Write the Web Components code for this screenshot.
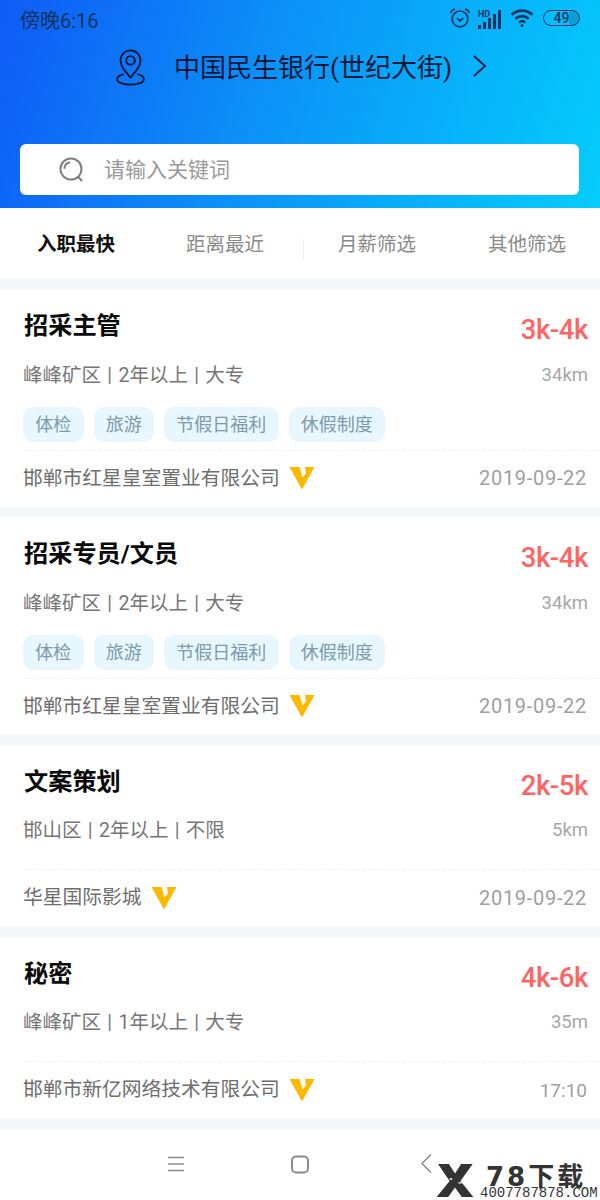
<!DOCTYPE html>
<html lang="zh"><head><meta charset="utf-8"><title>招聘</title>
<style>
html,body{margin:0;padding:0;background:#f2f7fa;}
body{width:600px;height:1200px;overflow:hidden;font-family:Roboto,"Noto Sans CJK SC",sans-serif;}
job-app{display:block;}
</style></head><body>
<template id="t-header"><style>
:host{display:block;height:208px;background:linear-gradient(108deg,#0f5bf6 0%,#0c8ff7 42%,#08b0fa 72%,#04cdfb 100%);position:relative;color:#0a1c3c;}
.status{display:flex;align-items:center;height:38px;padding:0 20px;font-size:20px;color:#12345e;}
.status .r{margin-left:auto;display:flex;align-items:center;gap:0;margin-top:-2px;}
.loc{display:flex;align-items:center;margin-top:5px;height:50px;padding-left:115px;font-size:26px;color:#071838;}
.loc .name{margin:-5px 0 0 28px;letter-spacing:0;white-space:nowrap;}
.loc .chev{margin:-4px 0 0 20px;}
.search{display:flex;align-items:center;margin:51px 21px 0 20px;height:51px;background:#fff;border-radius:6px;padding-left:38px;font-size:21px;color:#9a9a9a;}
.search span{margin:-4px 0 0 18px;}
svg{display:block;}
</style>
<div class="status"><slot name="time"></slot><div class="r">
<svg width="22" height="22" viewBox="0 0 24 24" fill="none" stroke="#12345e" stroke-width="1.800" style="margin-right:7px"><circle cx="12" cy="13" r="8.600"/><path d="M8.500 12.200l3.500 3 3.500-3M1.600 6.500C2.600 4 4.600 2.600 6.600 2.200M22.400 6.500c-1-2.500-3-3.900-5-4.300"/></svg>
<svg width="25" height="24" viewBox="0 0 25 24" style="margin-right:7px"><g fill="#12345e"><rect x="0" y="19" width="3" height="4"/><rect x="5" y="16" width="3" height="7"/><rect x="10" y="12" width="3" height="11"/><rect x="15" y="8" width="3" height="15"/><rect x="20" y="4" width="3" height="19"/></g><text x="0" y="10.500" font-size="9" font-weight="700" font-family="Roboto,sans-serif" fill="#12345e">HD</text></svg>
<svg width="24" height="20" viewBox="0 0 24 20" fill="none" stroke="#12345e" stroke-width="2.600" style="margin-right:9px"><path d="M1.500 6.800C7.500 1.200 16.500 1.200 22.500 6.800M5.300 10.800c4-3.600 9.400-3.600 13.400 0M8.900 14.400c1.900-1.500 4.300-1.500 6.200 0"/><circle cx="12" cy="17.600" r="1.500" fill="#12345e" stroke="none"/></svg>
<div style="width:35px;height:14px;border:1.600px solid #12345e;border-radius:8px;font-size:14px;line-height:14px;text-align:center;color:#12345e;font-weight:500;background:linear-gradient(90deg,transparent 70%,#0a9fd8 70%)">49</div>
</div></div>
<div class="loc">
<svg width="31" height="40" viewBox="0 0 32 42" fill="none" stroke="#071838" stroke-width="2"><path d="M16 31C10 24 5.500 19 5.500 13A10.500 10.500 0 0 1 26.500 13C26.500 19 22 24 16 31Z" stroke-linejoin="round"/><circle cx="16" cy="13" r="4.500"/><path d="M9 27.500C4.500 28.500 2 30.500 2 33c0 3 6 5.500 14 5.500s14-2.500 14-5.500c0-2.500-2.500-4.500-7-5.500"/></svg>
<span class="name"><slot name="place"></slot></span>
<svg class="chev" width="16" height="24" viewBox="0 0 16 24" fill="none" stroke="#071838" stroke-width="1.800"><path d="M2 2l11 10L2 22"/></svg>
</div>
<div class="search">
<svg width="28" height="28" viewBox="0 0 28 28" fill="none" stroke="#808080" stroke-width="2"><circle cx="13" cy="13" r="10.500"/><path d="M20.500 21l3 3.500M6.500 12c.3-3 2.500-5 5-5.500" stroke-linecap="round"/></svg>
<span><slot name="hint"></slot></span>
</div></template>

<template id="t-filter"><style>
:host{display:flex;align-items:center;height:71px;background:#fff;padding:0 0 2px 37px;font-size:19.500px;color:#8a8a8a;box-sizing:border-box;}
::slotted(*){display:block;width:78px;white-space:nowrap;}
</style><slot></slot></template>

<template id="t-job"><style>
:host{display:block;background:#fff;margin-top:10px;padding-left:24px;}
.top{box-sizing:border-box;padding:17px 12px 0 0;height:161px;}
:host([plain]) .top{height:124px;}
.row{display:flex;align-items:center;justify-content:space-between;}
.r1{height:40px;}
.title{font-size:24.200px;font-weight:700;color:#0a0a0a;margin-top:-6px;}
.sal{font-size:27.500px;color:#ff6464;font-weight:500;margin-top:6px;letter-spacing:-.4px;}
.r2{height:40px;margin-top:9px;font-size:19.500px;color:#767676;}
:host([plain]) .r2{margin-top:8px;}
.info{margin:-4px 0 0 -1px;word-spacing:1.500px;}
.km{font-size:18.500px;color:#a8a8a8;}
.tags{display:flex;gap:10px;margin:12px 0 0 -1px;}
.foot{display:flex;align-items:center;box-sizing:border-box;height:57px;border-top:1px dashed #eef0f2;padding-right:13px;font-size:19.750px;color:#6e6e6e;}
:host([plain]) .foot{height:58px;}
.co{margin:-6px 0 0 -1px;}
.foot svg{margin-left:9px;margin-top:-2px;}
.date{margin-left:auto;color:#a0a0a0;font-size:20px;margin-top:-2px;}
</style>
<div class="top"><div class="row r1"><div class="title"><slot name="title"></slot></div><div class="sal"><slot name="salary"></slot></div></div>
<div class="row r2"><div class="info"><slot name="meta"></slot></div><div class="km"><slot name="dist"></slot></div></div>
<div class="tags"><slot name="tag"></slot></div></div>
<div class="foot"><span class="co"><slot name="company"></slot></span>
<svg width="26" height="24" viewBox="0 0 26 24"><path d="M0.500 1H10.500L13.500 11.500 17 7.500 16 1H25.500L13 23.500Z" fill="#fdb900"/></svg>
<span class="date"><slot name="date"></slot></span></div></template>

<template id="t-tag"><style>
:host{display:block;height:35px;line-height:35px;padding:0 12.250px;background:#e8f6fd;border-radius:10px;color:#7c9bac;font-size:18px;white-space:nowrap;}
</style><slot></slot></template>

<template id="t-nav"><style>
:host{display:block;position:relative;margin-top:10px;background:#fff;padding-top:10px;height:71px;box-sizing:border-box;}
.btns{display:flex;align-items:center;height:50px;padding-left:167px;}
svg{display:block;}
.mark{position:absolute;left:436px;top:33px;width:164px;height:38px;color:#333;}
.logo{position:absolute;left:0;top:1px;}
.big{position:absolute;left:50px;top:6px;font-size:26px;font-weight:700;letter-spacing:3px;line-height:19px;white-space:nowrap;font-family:"DejaVu Sans","Noto Sans CJK SC",sans-serif;}
.small{position:absolute;left:44px;top:26px;font:14px/10px "Liberation Mono",monospace;white-space:nowrap;}
</style>
<div class="btns">
<svg width="18" height="16" viewBox="0 0 18 16" stroke="#8c8c8c" stroke-width="1.500"><path d="M1 1.500h16M1 8h16M1 14.500h16"/></svg>
<svg width="18" height="19" viewBox="0 0 18 19" fill="none" stroke="#8c8c8c" stroke-width="2" style="margin-left:106px"><rect x="1" y="1.500" width="16" height="16" rx="4"/></svg>
<svg width="14" height="22" viewBox="0 0 14 22" fill="none" stroke="#8c8c8c" stroke-width="1.500" style="margin-left:111px"><path d="M11 1.500L2 10.500l9 9"/></svg>
</div>
<div class="mark">
<svg class="logo" width="38" height="34" viewBox="0 0 56 36" preserveAspectRatio="none"><path fill="#333" d="M3 1H19L28 11 37 1H54L36 19 55 36H38L28 26 18 36H1L20 19Z"/><path stroke="#fff" stroke-width="1.500" stroke-dasharray="5 3" d="M4 17H24M33 21H52"/></svg>
<span class="big"><slot name="brand"></slot></span><span class="small"><slot name="phone"></slot></span>
</div></template>

<template id="t-app"><style>:host{display:block;width:600px;height:1200px;overflow:hidden;}</style><slot></slot></template>

<job-app>
<job-header>
<span slot="time">傍晚6:16</span><span slot="place">中国民生银行(世纪大街)</span><span slot="hint">请输入关键词</span>
</job-header>
<job-filter>
<span style="color:#111;font-weight:700">入职最快</span>
<span style="margin-left:71px">距离最近</span>
<span style="width:1px;height:22px;background:#eceef0;margin:14px 0 0 39px"></span>
<span style="margin-left:34px">月薪筛选</span>
<span style="margin-left:72px">其他筛选</span>
</job-filter>
<job-card>
<span slot="title">招采主管</span><span slot="salary">3k-4k</span><span slot="meta">峰峰矿区 | 2年以上 | 大专</span><span slot="dist">34km</span>
<job-tag slot="tag">体检</job-tag><job-tag slot="tag">旅游</job-tag><job-tag slot="tag">节假日福利</job-tag><job-tag slot="tag">休假制度</job-tag>
<span slot="company">邯郸市红星皇室置业有限公司</span><span slot="date" style="letter-spacing:.7px">2019-09-22</span>
</job-card>
<job-card>
<span slot="title">招采专员/文员</span><span slot="salary">3k-4k</span><span slot="meta">峰峰矿区 | 2年以上 | 大专</span><span slot="dist">34km</span>
<job-tag slot="tag">体检</job-tag><job-tag slot="tag">旅游</job-tag><job-tag slot="tag">节假日福利</job-tag><job-tag slot="tag">休假制度</job-tag>
<span slot="company">邯郸市红星皇室置业有限公司</span><span slot="date" style="letter-spacing:.7px">2019-09-22</span>
</job-card>
<job-card plain>
<span slot="title">文案策划</span><span slot="salary">2k-5k</span><span slot="meta">邯山区 | 2年以上 | 不限</span><span slot="dist">5km</span>
<span slot="company">华星国际影城</span><span slot="date" style="letter-spacing:.7px">2019-09-22</span>
</job-card>
<job-card plain>
<span slot="title">秘密</span><span slot="salary">4k-6k</span><span slot="meta">峰峰矿区 | 1年以上 | 大专</span><span slot="dist">35m</span>
<span slot="company">邯郸市新亿网络技术有限公司</span><span slot="date" style="font-size:19px">17:10</span>
</job-card>
<job-nav><span slot="brand">78下载</span><span slot="phone">4007787878.COM</span></job-nav>
</job-app>
<script>
for (const [tag, id] of [['job-app','t-app'],['job-header','t-header'],['job-filter','t-filter'],['job-card','t-job'],['job-tag','t-tag'],['job-nav','t-nav']]) {
  customElements.define(tag, class extends HTMLElement {
    constructor(){ super(); this.attachShadow({mode:'open'}).appendChild(document.getElementById(id).content.cloneNode(true)); }
  });
}
</script>
</body></html>
